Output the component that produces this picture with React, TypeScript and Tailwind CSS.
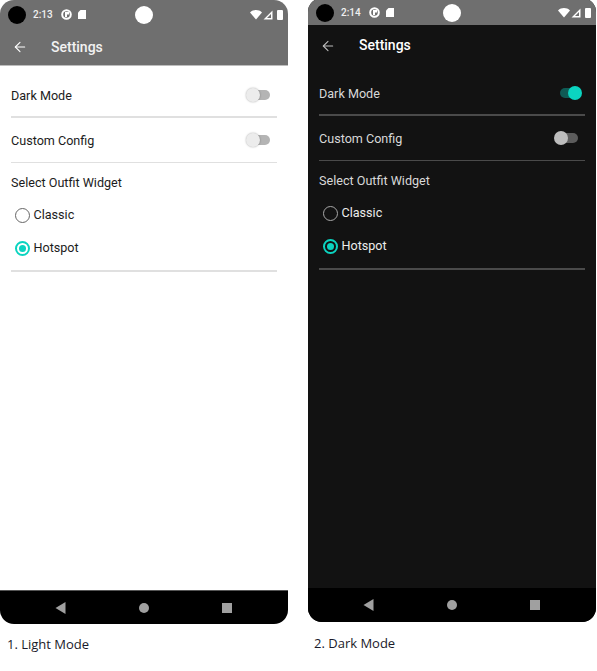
import { ArrowLeft } from 'lucide-react';

interface PhoneProps {
  dark: boolean;
  time: string;
  caption: string;
}

function StatusIcons() {
  return (
    <div className="flex items-center gap-[1px]">
      <svg width="12" height="10" viewBox="0 0 12 10">
        <path d="M0 2.4 C3.4 -0.8 8.6 -0.8 12 2.4 L6 9.5 Z" fill="#fff" />
      </svg>
      <svg width="10" height="10" viewBox="0 0 10 10">
        <path d="M9.5 0.5 V9.5 H0.5 Z M8 4 L4 8 H8 Z" fill="#fff" fillRule="evenodd" />
      </svg>
      <div className="ml-[3px] w-[6px] h-[10px] bg-white rounded-[1px]" />
    </div>
  );
}

function Toggle({ dark, on }: { dark: boolean; on?: boolean }) {
  if (on) {
    return (
      <div className="relative w-[24px] h-[14px] -mt-[2px]">
        <div className="absolute left-[6px] top-[2px] w-[16px] h-[10px] rounded-full bg-[#0f5a54]" />
        <div className="absolute left-[14px] top-0 w-[14px] h-[14px] rounded-full bg-[#0bd4c0]" />
      </div>
    );
  }
  return (
    <div className="relative w-[24px] h-[14px] -mt-[2px]">
      <div className={`absolute right-0 top-[2px] w-[22px] h-[10px] rounded-full ${dark ? 'bg-[#5c5c5c]' : 'bg-[#b4b4b4]'}`} />
      <div className={`absolute left-0 top-0 w-[14px] h-[14px] rounded-full ${dark ? 'bg-[#bdbdbd]' : 'bg-[#ececec] shadow-[0_0_2px_rgba(0,0,0,0.35)]'}`} />
    </div>
  );
}

function Radio({ dark, label, checked }: { dark: boolean; label: string; checked?: boolean }) {
  return (
    <div className="flex items-center h-[33px] pl-[4px]">
      <div
        className={`flex items-center justify-center w-[15px] h-[15px] rounded-full ${
          checked ? 'border-2 border-[#0bd4c0]' : dark ? 'border-[1.5px] border-[#a8a8a8]' : 'border-[1.5px] border-[#666666]'
        }`}
      >
        {checked && <div className="w-[7px] h-[7px] rounded-full bg-[#0bd4c0]" />}
      </div>
      <span className={`ml-[3.5px] text-[12.6px] ${dark ? 'text-[#ececec]' : 'text-[#1c1c1c]'}`}>{label}</span>
    </div>
  );
}

function Phone({ dark, time, caption }: PhoneProps) {
  const text = dark ? 'text-[#d8d8d8]' : 'text-[#1c1c1c]';
  const line = dark ? 'bg-[#4a4a4a]' : 'bg-[#e0e0e0]';

  return (
    <div className="w-[288px]">
      <div className={`flex flex-col h-[624px] rounded-t-[14px] rounded-b-[14px] overflow-hidden ${dark ? 'bg-[#121212]' : 'bg-white'}`}>
        {/* Status bar */}
        <div className="relative flex items-center justify-between h-[27px] pl-[8px] pr-[5px] pt-[2px] shrink-0 bg-[#6f6f6f]">
          <div className="flex items-center">
            <div className="w-[18px] h-[18px] rounded-full bg-black" />
            <span className="ml-[7px] text-[10px] font-medium text-[#f0f0f0]">{time}</span>
            <svg className="ml-[8px]" width="11" height="11" viewBox="0 0 11 11">
              <circle cx="5.5" cy="5.5" r="4.3" fill="none" stroke="#fff" strokeWidth="2" />
              <path d="M4 3 H8 V5.5 H6 V8 H4 Z" fill="#fff" />
            </svg>
            <svg className="ml-[6px]" width="8" height="9" viewBox="0 0 8 9">
              <path d="M2.5 0 H8 V9 H0 V2.5 Z" fill="#fff" />
            </svg>
          </div>
          <div className="absolute left-[135px] top-[6px] w-[18px] h-[18px] rounded-full bg-white" />
          <StatusIcons />
        </div>

        {/* Toolbar */}
        <div className={`flex items-center h-[39px] pl-[12px] pt-[2px] shrink-0 ${dark ? '' : 'bg-[#6f6f6f] border-b border-[#bdbdbd]'}`}>
          <ArrowLeft size={16} strokeWidth={1.6} className={dark ? 'text-[#bdbdbd]' : 'text-white'} />
          <span className={`ml-[23px] text-[14px] font-medium ${dark ? 'text-white' : 'text-[#f2f2f2]'}`}>Settings</span>
        </div>

        {/* Settings list */}
        <div className="flex-1 px-[11px]">
          <div className="flex items-center justify-between h-[50px] pt-[10px] pr-[7px]">
            <span className={`text-[12.6px] ${text}`}>Dark Mode</span>
            <Toggle dark={dark} on={dark} />
          </div>
          <div className={`h-[1.5px] ${line}`} />
          <div className="flex items-center justify-between h-[44px] pt-[3px] pr-[7px]">
            <span className={`text-[12.6px] ${text}`}>Custom Config</span>
            <Toggle dark={dark} />
          </div>
          <div className={`h-[1.5px] ${line}`} />
          <div className={`mt-[12px] h-[17px] flex items-center text-[12.6px] ${text}`}>Select Outfit Widget</div>
          <div className="mt-[7px]">
            <Radio dark={dark} label="Classic" />
            <Radio dark={dark} label="Hotspot" checked />
          </div>
          <div className={`mt-[5px] h-[1.5px] ${line}`} />
        </div>

        {/* Nav bar */}
        <div className={`flex items-center h-[34px] pl-[55px] shrink-0 bg-black ${dark ? '' : 'border-t border-[#555555]'}`}>
          <svg width="11" height="12" viewBox="0 0 11 12">
            <path d="M0.5 6 L10.5 0 V12 Z" fill="#a0a0a0" />
          </svg>
          <div className="ml-[73px] w-[10px] h-[10px] rounded-full bg-[#a0a0a0]" />
          <div className="ml-[73px] w-[10px] h-[10px] bg-[#a0a0a0]" />
        </div>
      </div>
      <div className={`${dark ? 'mt-[13px] pl-[6px]' : 'mt-[12px] pl-[7px]'} text-[13px] leading-[16px] text-[#1a1a2a] font-['Open_Sans',sans-serif]`}>
        {caption}
      </div>
    </div>
  );
}

export default function App() {
  return (
    <div className="flex items-start gap-[20px] w-[597px] h-[671px] overflow-hidden bg-white font-['Roboto',sans-serif]">
      <Phone dark={false} time="2:13" caption="1. Light Mode" />
      <div className="-mt-[2px]">
        <Phone dark time="2:14" caption="2. Dark Mode" />
      </div>
    </div>
  );
}
